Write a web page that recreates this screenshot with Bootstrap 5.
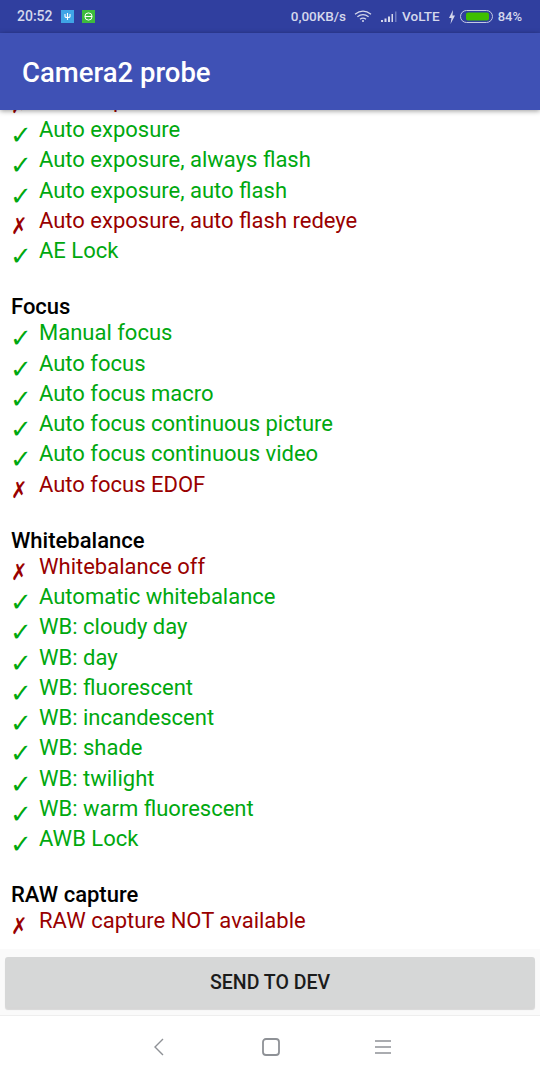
<!DOCTYPE html>
<html lang="en">
<head>
    <meta charset="UTF-8">
    <meta name="viewport" content="width=device-width, initial-scale=1.0">
    <title>Camera2 probe</title>
    <link href="https://cdn.jsdelivr.net/npm/bootstrap@5.3.0/dist/css/bootstrap.min.css" rel="stylesheet">
    <style>
        body {
            width: 540px;
            height: 1080px;
            overflow: hidden;
            font-family: Roboto, sans-serif;
            background: #fff;
        }
        .status-bar {
            height: 33px;
            padding: 0 18px 0 17px;
            background: #303f9f;
            color: #d5d8ec;
            font-size: 13.5px;
            font-weight: 500;
        }
        .status-time { font-size: 14px; }
        .status-pct { font-size: 13px; }
        .app-bar {
            height: 77px;
            padding: 3px 22px 0;
            background: #3f51b5;
            color: #fff;
            font-size: 27.5px;
            font-weight: 500;
            box-shadow: 0 1px 5px rgba(0, 0, 0, 0.4);
            z-index: 1;
        }
        .probe-list {
            height: 839px;
            padding: 0 11px 12.5px;
            overflow: hidden;
            justify-content: flex-end;
        }
        .probe-group { flex-shrink: 0; margin-bottom: 30px; }
        .probe-group:last-child { margin-bottom: 0; }
        .probe-title {
            height: 22px;
            line-height: 22px;
            font-size: 22px;
            font-weight: 500;
            color: #000;
        }
        .probe-row {
            height: 30.25px;
            line-height: 30px;
            font-size: 22px;
        }
        .probe-mark {
            width: 28px;
            flex-shrink: 0;
            padding-top: 5px;
            font-family: "DejaVu Sans", sans-serif;
            font-size: 26px;
        }
        .is-ok .probe-mark {
            margin-left: -1px;
            width: 29px;
        }
        .is-no .probe-mark {
            font-size: 23px;
            transform: scaleX(0.85);
            transform-origin: left center;
        }
        .is-ok { color: #00a80f; }
        .is-no { color: #990000; }
        .button-bar {
            height: 67px;
            padding: 8px 5px 0;
            background: #fafafa;
            border-bottom: 1px solid #eeeeee;
        }
        .send-btn {
            width: 100%;
            height: 50px;
            padding: 2px 0 0;
            border: 0;
            border-radius: 3px;
            background: #d6d7d7;
            color: #1b1b1b;
            font-size: 19.5px;
            font-weight: 500;
            box-shadow: 0 3px 1px rgba(0, 0, 0, 0.14);
        }
        .nav-bar {
            height: 64px;
            padding: 0 0 2px 2px;
            gap: 90px;
        }
    </style>
</head>
<body class="d-flex flex-column">

    <div class="status-bar d-flex align-items-center">
        <span class="status-time">20:52</span>
        <svg class="ms-2" width="13" height="13" viewBox="0 0 13 13"><rect width="13" height="13" fill="#3fa4e6"/><path d="M6.5 3v7M4 4v2.5q0 1 2.5 1t2.500-1V4" fill="none" stroke="#fff" stroke-width="1.1"/></svg>
        <svg class="ms-2" width="13" height="13" viewBox="0 0 13 13"><rect width="13" height="13" fill="#3dbb3d"/><circle cx="6.5" cy="6.5" r="3.6" fill="none" stroke="#fff"/><path d="M3 6.5h7" stroke="#fff"/></svg>
        <span class="ms-auto">0,00KB/s</span>
        <svg class="ms-2" width="18" height="13" viewBox="0 0 18 13" fill="none" stroke="#d5d8ec" stroke-width="1.3"><path d="M1 4.2q8-6 16 0M3.4 6.8q5.6-4.2 11.2 0M6 9.2q3-2 6 0"/><circle cx="9" cy="11" r="1" fill="#d5d8ec" stroke="none"/></svg>
        <svg class="ms-2" width="18" height="13" viewBox="0 0 18 13"><path d="M1 10h2v2H1zM4.500 8.500h2V12h-2zM8 6.500h2V12H8zM11.500 4h1.500v8h-1.500z" fill="#d5d8ec"/><path d="M15 1.500h1.500V12H15z" fill="#6f7cc0"/></svg>
        <span class="ms-1">VoLTE</span>
        <svg class="ms-2" width="8" height="14" viewBox="0 0 8 14"><path d="M5 0 1 8h2.500L2.500 14 7 5.500H4.500z" fill="#d5d8ec"/></svg>
        <svg class="ms-1" width="34" height="14" viewBox="0 0 34 14"><rect x=".5" y=".5" width="32" height="12" rx="6" fill="none" stroke="#c3c8e4"/><rect x="6" y="2.500" width="23" height="8" rx="2" fill="#3fbf00"/></svg>
        <span class="ms-1 status-pct">84%</span>
    </div>

    <div class="app-bar d-flex align-items-center position-relative">Camera2 probe</div>

    <div class="probe-list d-flex flex-column" id="probeList"></div>

    <div class="button-bar">
        <button type="button" class="btn send-btn">SEND TO DEV</button>
    </div>

    <div class="nav-bar d-flex justify-content-center align-items-center">
        <svg width="22" height="20" viewBox="0 0 22 20" fill="none" stroke="#8e9196" stroke-width="1.4"><path d="M15 2 7 10l8 8"/></svg>
        <svg width="22" height="20" viewBox="0 0 22 20" fill="none" stroke="#8e9196" stroke-width="1.8"><rect x="3" y="2" width="16" height="16" rx="3"/></svg>
        <svg width="22" height="20" viewBox="0 0 22 20" fill="none" stroke="#8e9196" stroke-width="1.4"><path d="M3 4h16M3 10h16M3 16h16"/></svg>
    </div>

    <script>
        // true = supported, false = not supported
        let groups = [
            { rows: [
                ["Auto exposure off", false],
                ["Auto exposure", true],
                ["Auto exposure, always flash", true],
                ["Auto exposure, auto flash", true],
                ["Auto exposure, auto flash redeye", false],
                ["AE Lock", true]
            ] },
            { title: "Focus", rows: [
                ["Manual focus", true],
                ["Auto focus", true],
                ["Auto focus macro", true],
                ["Auto focus continuous picture", true],
                ["Auto focus continuous video", true],
                ["Auto focus EDOF", false]
            ] },
            { title: "Whitebalance", rows: [
                ["Whitebalance off", false],
                ["Automatic whitebalance", true],
                ["WB: cloudy day", true],
                ["WB: day", true],
                ["WB: fluorescent", true],
                ["WB: incandescent", true],
                ["WB: shade", true],
                ["WB: twilight", true],
                ["WB: warm fluorescent", true],
                ["AWB Lock", true]
            ] },
            { title: "RAW capture", rows: [
                ["RAW capture NOT available", false]
            ] }
        ];

        let html = "";
        groups.forEach(function(group) {
            html += '<div class="probe-group">';
            if (group.title) html += '<div class="probe-title">' + group.title + '</div>';
            group.rows.forEach(function(row) {
                let cls = row[1] ? "is-ok" : "is-no";
                html += '<div class="probe-row d-flex ' + cls + '"><span class="probe-mark">' + (row[1] ? "\u2713" : "\u2717") + '</span><span>' + row[0] + '</span></div>';
            });
            html += '</div>';
        });
        document.getElementById("probeList").innerHTML = html;
    </script>
    <script src="https://cdn.jsdelivr.net/npm/bootstrap@5.3.0/dist/js/bootstrap.bundle.min.js"></script>
</body>
</html>
